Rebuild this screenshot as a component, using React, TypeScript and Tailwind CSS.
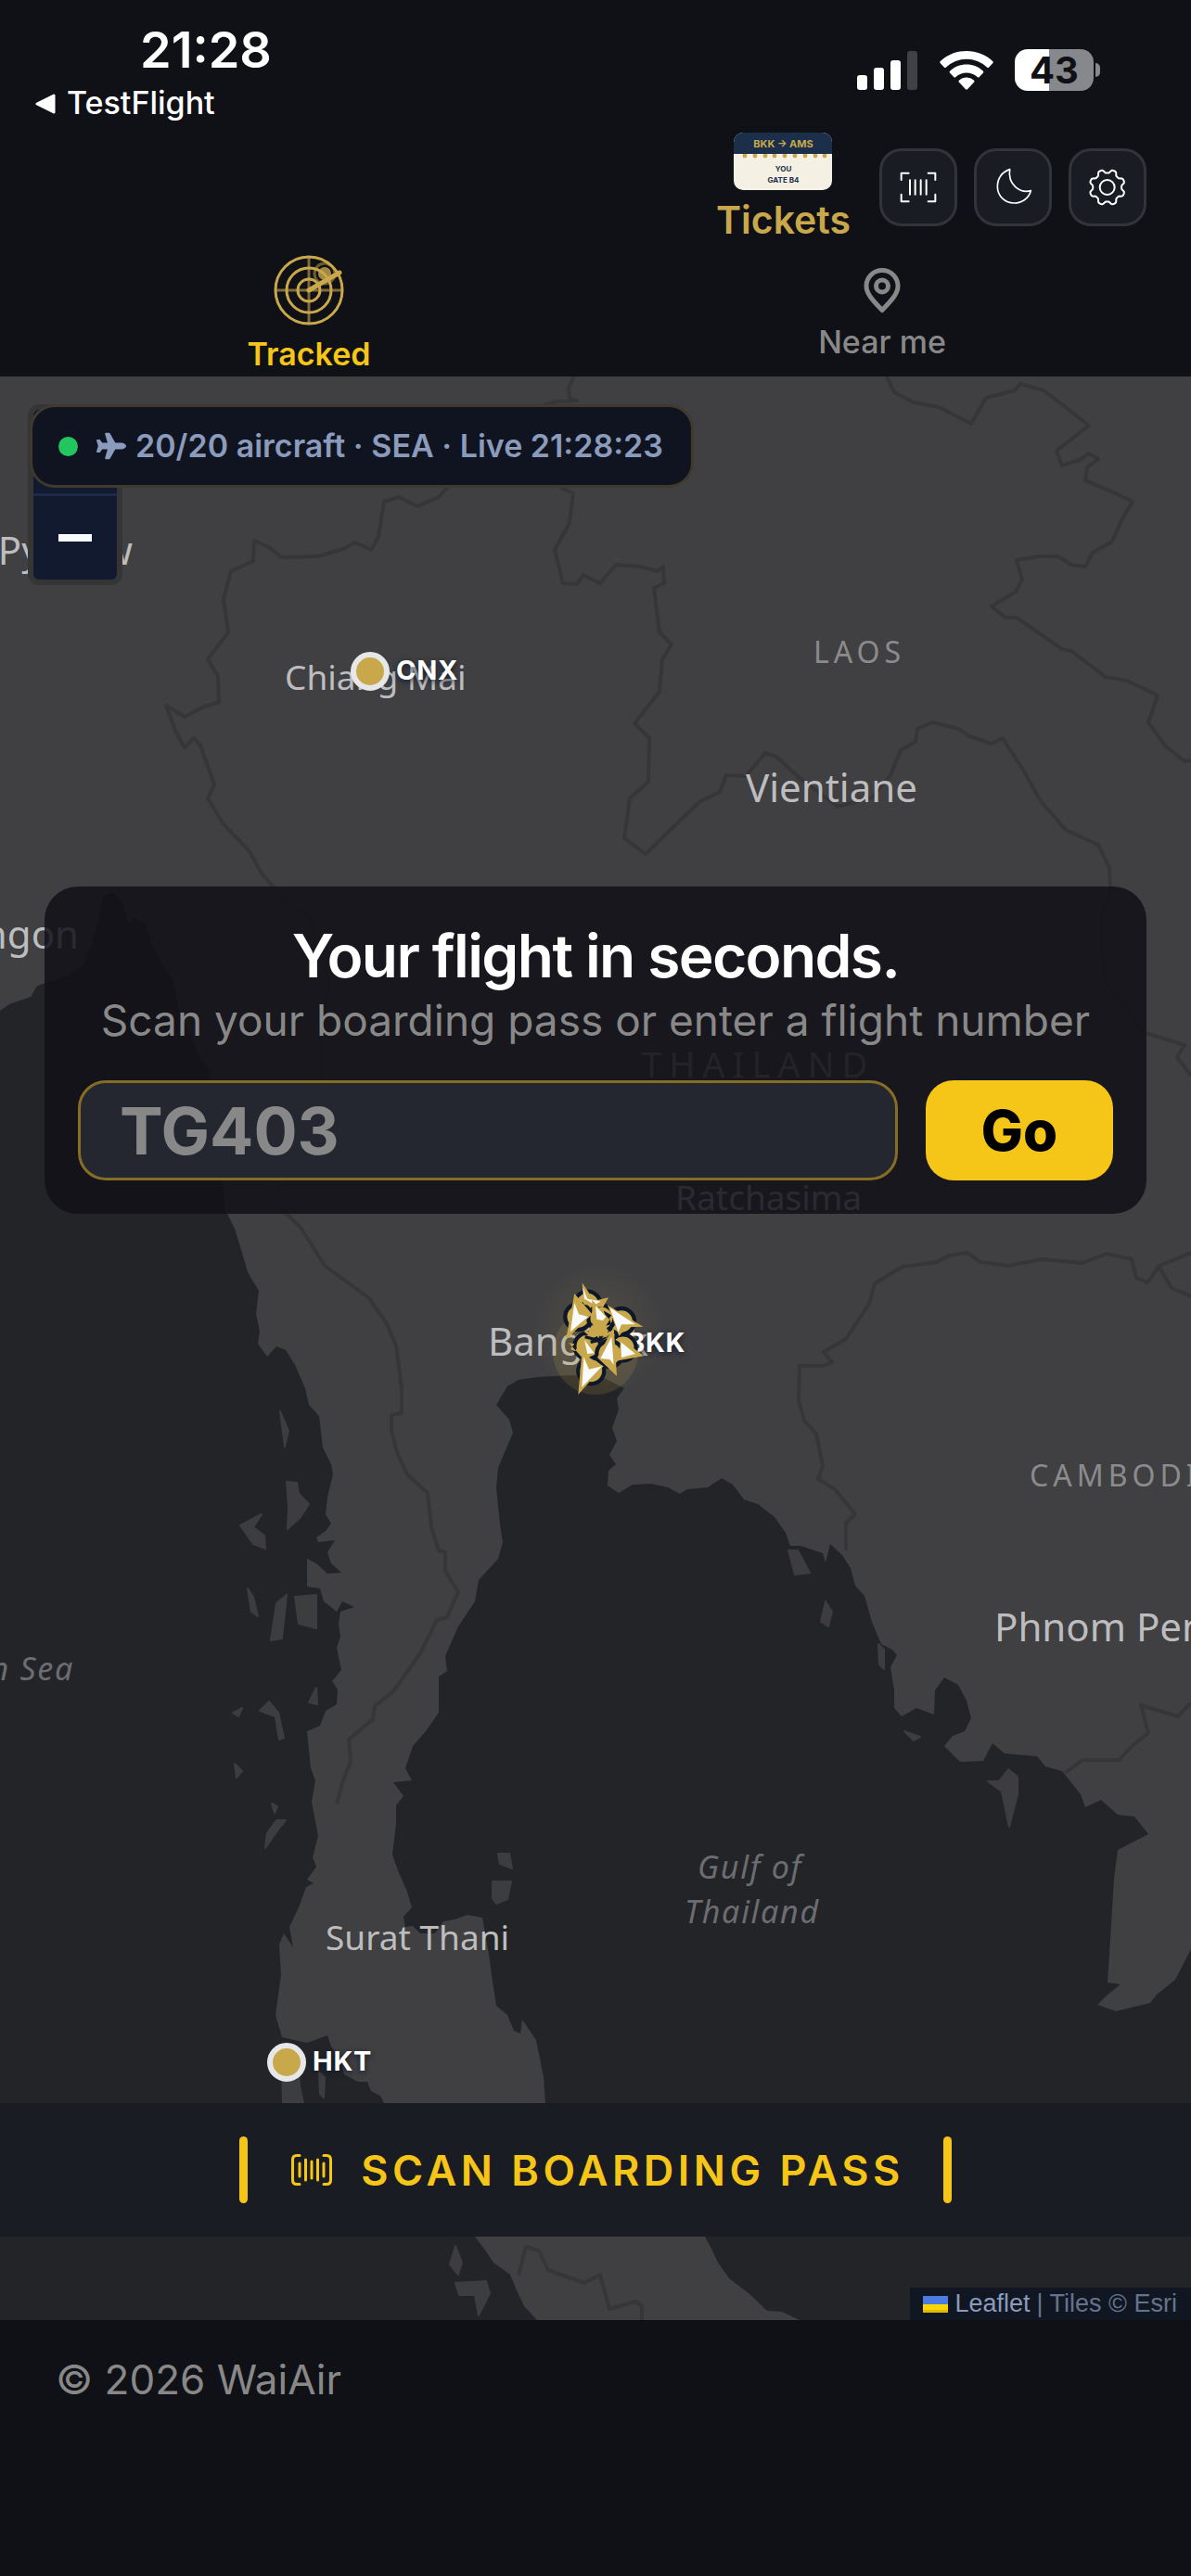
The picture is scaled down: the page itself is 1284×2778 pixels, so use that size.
import type { ReactNode } from "react";
import { FaPlane } from "react-icons/fa";

const WATER = [
  // Andaman Sea
  "M0 1090L10 1083L33 1075L40 1063L75 1052L90 1040L100 1015L108 985L112 965L122 962L133 975L138 995L146 990L158 998L163 1018L175 1040L186 1056L190 1075L195 1095L207 1120L213 1138L224 1150L228 1170L235 1220L240 1275L243 1305L253 1325L261 1351L267 1372L279 1392L276 1417L280 1436L278 1449L288 1463L298 1452L308 1456L318 1472L329 1497L333 1515L344 1527L348 1561L357 1579L359 1590L353 1615L351 1633L357 1643L351 1651L341 1658L343 1663L361 1661L353 1674L357 1686L368 1696L353 1697L341 1686L331 1681L331 1711L345 1713L349 1727L363 1738L369 1727L382 1733L367 1738L365 1751L367 1765L363 1777L368 1801L358 1813L364 1822L363 1838L351 1845L345 1861L331 1867L335 1907L340 1920L336 1943L343 1980L337 2003L341 2013L331 2027L338 2031L330 2035L322 2057L312 2078L316 2100L306 2085L301 2097L303 2130L297 2173L304 2197L331 2203L353 2195L357 2207L365 2217L371 2237L386 2245L396 2245L400 2255L410 2260L414 2268L450 2330L500 2395L512 2412L524 2428L532 2440L550 2453L557 2470L565 2487L579 2502L0 2502Z",
  // Gulf of Thailand
  "M580 1485L616 1483L649 1485L673 1497L665 1508L667 1520L660 1540L665 1554L657 1569L664 1579L656 1586L655 1602L667 1610L682 1601L702 1600L720 1604L733 1611L741 1606L763 1604L778 1594L790 1601L802 1617L817 1622L835 1636L847 1653L852 1667L863 1667L887 1675L890 1685L895 1665L908 1677L917 1691L922 1710L932 1721L940 1749L950 1773L962 1779L967 1785L960 1798L964 1823L964 1842L972 1851L988 1842L1007 1849L1008 1823L1018 1809L1033 1817L1042 1834L1047 1853L1040 1867L1027 1872L1018 1883L1035 1900L1060 1899L1070 1880L1083 1891L1118 1894L1127 1905L1145 1910L1165 1935L1170 1949L1187 1941L1205 1957L1223 1959L1238 1978L1205 1995L1201 2026L1196 2108L1194 2138L1208 2140L1193 2152L1183 2162L1203 2169L1240 2160L1247 2151L1267 2135L1284 2102L1284 2502L862 2502L843 2493L827 2492L807 2473L786 2457L774 2440L766 2423L760 2412L720 2370L640 2330L588 2268L586 2240L578 2200L563 2178L561 2193L554 2190L547 2173L535 2163L530 2130L527 2107L520 2068L504 2065L490 2070L478 2072L469 2085L453 2085L445 2077L437 2078L435 2067L444 2057L439 2040L429 2017L423 2000L427 1967L427 1947L435 1937L424 1922L444 1920L437 1907L445 1883L459 1867L473 1847L473 1808L482 1802L480 1786L494 1754L512 1727L516 1704L537 1681L542 1663L539 1644L535 1604L537 1583L553 1545L549 1531L535 1515L547 1495L559 1488Z",
];

const ISLANDS = [
  "M302 1522L311 1543L307 1560Z",
  "M309 1598L320 1599L322 1611L333 1622L324 1636L310 1649L311 1626Z",
  "M259 1645L282 1633L273 1647L285 1656L286 1670L273 1665Z",
  "M267 1713L273 1722L278 1743L271 1738Z",
  "M298 1729L309 1720L304 1767L292 1769Z",
  "M318 1722L341 1720L341 1756L322 1751Z",
  "M333 1836L341 1820L342 1838Z",
  "M280 1845L290 1835L300 1847L306 1874L301 1876L297 1851Z",
  "M251 1847L261 1842L257 1851Z",
  "M253 1902L261 1910L255 1917Z",
  "M293 1945L299 1948L296 1955Z",
  "M288 1977L298 1963L308 1963L300 1973L286 1993Z",
  "M537 1999L549 1999L552 2015L539 2010Z",
  "M531 2029L551 2029L547 2048L535 2053L531 2047Z",
  "M304 2222L322 2233L323 2250L327 2268L305 2268Z",
  "M344 2235L350 2240L349 2262L345 2258Z",
  "M850 1672L860 1672L873 1696L857 1698Z",
  "M890 1727L897 1738L893 1754L885 1749Z",
  "M947 1773L953 1779L953 1800L948 1795Z",
  "M975 1867L992 1873L985 1877Z",
  "M1065 1921L1077 1921L1087 1908L1097 1916L1097 1935L1088 1970L1080 1932Z",
  "M491 2422L498 2440L494 2453L485 2442Z",
  "M491 2462L524 2460L528 2473L516 2497L512 2475L495 2475Z",
];

const BORDERS = [
  "M619 406L613 418L614 429L622 432L600 433L587 437L560 470L520 500L482 526L473 536L450 546L430 536L414 541L408 579L400 593L383 585L370 592L343 600L303 601L290 590L274 583L273 605L249 616L241 646L246 682L224 711L235 729L236 757L218 763L199 773L179 761L190 790L199 806L209 796L216 804L231 846L224 861L241 889L269 918L282 942L313 977L335 990L338 1005L355 1060L345 1110L345 1160L320 1220L295 1270L305 1305L325 1325L350 1365L398 1400L416 1426L427 1451L433 1497L433 1524L422 1526L422 1544L429 1569L439 1590L461 1610L465 1647L473 1672L480 1674L480 1694L494 1717L482 1744L471 1747L453 1783L424 1824L404 1840L402 1854L376 1876L378 1900L370 1920L363 1945",
  "M604 526L618 532L614 564L598 593L607 629L622 630L629 620L647 629L664 609L690 611L709 616L715 611L716 629L705 634L711 682L724 695L714 711L711 746L684 780L700 796L699 843L679 861L673 904L696 921L732 886L755 864L776 854L783 836L804 837L825 812L837 816L862 839L903 870L940 860L960 836L971 809L987 800L989 786L1005 779L1034 786L1045 794L1069 802L1081 796L1104 832L1122 864L1149 895L1184 911L1196 936L1197 957L1187 990L1191 1057L1232 1113L1277 1127L1269 1140L1284 1160",
  "M956 406L964 423L985 434L1012 439L1047 457L1063 429L1094 421L1100 414L1125 421L1150 440L1174 459L1139 486L1145 502L1164 496L1174 489L1184 495L1172 504L1170 518L1207 534L1221 541L1209 561L1199 584L1178 596L1170 611L1155 609L1141 600L1120 600L1096 604L1102 625L1095 638L1069 654L1084 666L1096 666L1145 700L1155 702L1192 730L1215 734L1248 750L1238 779L1256 804L1277 821L1284 820",
  "M1284 1351L1250 1365L1237 1383L1225 1378L1220 1358L1193 1352L1167 1362L1123 1358L1087 1365L1057 1361L1043 1351L1023 1354L1010 1361L973 1366L943 1384L937 1406L912 1444L888 1458L897 1469L888 1473L862 1473L861 1510L867 1532L880 1546L887 1581L882 1595L900 1606L922 1633L912 1642L912 1672",
  "M1250 1367L1263 1389L1284 1398",
  "M1148 1912L1167 1898L1207 1898L1220 1883L1238 1869L1230 1839L1270 1851L1284 1836",
  "M559 2453L567 2423L581 2427L591 2448L630 2462L647 2453L657 2490L685 2482L692 2487L692 2502",
];

type Place = { name: string; x: number; y: number; anchor?: "end"; cls: string };

const CAPITAL = "fill-[#bdbdbf] text-[42px]";
const CITY = "fill-[#bdbdbf] text-[37px]";
const COUNTRY = "fill-[#8b8b8d] text-[32px]";
const SEA = "fill-[#6c6d71] text-[34px] italic tracking-wider";

const PLACES: Place[] = [
  { name: "Nay Pyi Taw", x: 143, y: 609, anchor: "end", cls: CAPITAL },
  { name: "Chiang Mai", x: 307, y: 744, cls: CITY },
  { name: "Vientiane", x: 804, y: 865, cls: CAPITAL },
  { name: "Yangon", x: 85, y: 1023, anchor: "end", cls: CAPITAL },
  { name: "Ratchasima", x: 728, y: 1305, cls: CITY },
  { name: "Bangkok", x: 526, y: 1462, cls: CAPITAL },
  { name: "Phnom Penh", x: 1072, y: 1770, cls: CAPITAL },
  { name: "Surat Thani", x: 351, y: 2103, cls: CITY },
  { name: "LAOS", x: 877, y: 715, cls: COUNTRY + " tracking-[5px]" },
  { name: "THAILAND", x: 692, y: 1162, cls: "fill-[#8b8b8d] text-[38px] tracking-[8px]" },
  { name: "CAMBODIA", x: 1110, y: 1603, cls: COUNTRY + " tracking-[5px]" },
  { name: "Andaman Sea", x: 80, y: 1812, anchor: "end", cls: SEA },
  { name: "Gulf of", x: 752, y: 2026, cls: SEA },
  { name: "Thailand", x: 738, y: 2074, cls: SEA },
];

const AIRPORTS = [
  { code: "CNX", x: 399, y: 724 },
  { code: "HKT", x: 309, y: 2224 },
];

const DISCS = [
  [190, 140], [160, 180], [300, 195], [235, 185], [190, 275], [305, 280], [262, 300], [202, 355],
];

const DARTS = [
  { body: "173,70 212,128 258,118 240,150 178,140", wing: "175,85 190,122 232,130 215,142 180,122" },
  { body: "148,105 205,172 120,255", wing: "148,135 162,172 192,180 135,228" },
  { body: "205,125 262,190 225,250 205,200", wing: "216,145 250,180 240,192 220,188" },
  { body: "255,142 370,212 318,214 292,242", wing: "262,150 345,205 300,205 290,230" },
  { body: "130,265 148,268 135,285 150,292 175,250 215,300 180,320", wing: "180,255 212,298 190,300" },
  { body: "372,307 290,322 298,250", wing: "298,262 345,300 300,312" },
  { body: "275,212 285,372 222,312", wing: "268,245 275,335 262,318 232,315" },
  { body: "172,298 242,340 160,432", wing: "178,310 195,350 238,340 172,408" },
];

function AircraftCluster() {
  return (
    <g transform="translate(570 1360) scale(.3333)">
      {DISCS.map(([cx, cy]) => (
        <circle key={cx + "-" + cy} cx={cx} cy={cy} r="42" fill="#c9a84c" stroke="#0f172a" strokeWidth="13" />
      ))}
      <circle cx="225" cy="230" r="30" fill="#c9a84c" />
      <path d="M205 205l22 -10l10 12l24 -6l-10 -30l14 8M182 245l30 8l26 -12M200 262l34 -8l14 -10" fill="none" stroke="#0f172a" strokeWidth="10" />
      {DARTS.map((d) => (
        <g key={d.body}>
          <polygon points={d.body} fill="#c9a84c" />
          <polygon points={d.wing} fill="#f8fafc" />
        </g>
      ))}
      <path d="M182 225l14 12l4 -14l12 14l14 -8l8 10l20 -16l-8 18l28 -14" fill="none" stroke="#c9a84c" strokeWidth="8" />
    </g>
  );
}

function AirportCode({ x, y, code }: { x: number; y: number; code: string }) {
  return (
    <text x={x} y={y} className="fill-white text-[29px] font-bold tracking-wide [font-family:Inter,sans-serif] [text-shadow:0_2px_6px_#0f172a]">
      {code}
    </text>
  );
}

function MapCanvas() {
  return (
    <svg
      viewBox="0 406 1284 2096"
      preserveAspectRatio="xMidYMid slice"
      className="absolute inset-0 h-full w-full [font-family:'Noto_Sans',sans-serif]"
      role="img"
      aria-label="Map of Thailand"
    >
      <defs>
        <radialGradient id="halo">
          <stop offset="0" stopColor="#c9a84c" stopOpacity=".14" />
          <stop offset="1" stopColor="#c9a84c" stopOpacity="0" />
        </radialGradient>
      </defs>
      <rect y="406" width="1284" height="2096" fill="#404042" />
      {BORDERS.map((d) => (
        <path key={d} d={d} fill="none" stroke="#363638" strokeWidth="4" strokeLinejoin="round" />
      ))}
      {WATER.map((d) => (
        <path key={d} d={d} fill="#232428" />
      ))}
      {ISLANDS.map((d) => (
        <path key={d} d={d} fill="#3d3d40" stroke="#3d3d40" strokeWidth="2" strokeLinejoin="round" />
      ))}
      {PLACES.map((p) => (
        <text key={p.name} x={p.x} y={p.y} textAnchor={p.anchor} className={p.cls}>
          {p.name}
        </text>
      ))}
      {AIRPORTS.map((a) => (
        <g key={a.code}>
          <circle cx={a.x} cy={a.y} r="18" fill="#c9a84c" stroke="#e6e7e9" strokeWidth="6" />
          <AirportCode x={a.x + 28} y={a.y + 9} code={a.code} />
        </g>
      ))}
      <AirportCode x={676} y={1458} code="BKK" />
      <circle cx="645" cy="1434" r="72" fill="url(#halo)" />
      <circle cx="642" cy="1458" r="46" fill="#c9a84c" opacity=".15" />
      <AircraftCluster />
    </svg>
  );
}

function SignalIcon() {
  return (
    <svg viewBox="0 0 66 42" className="h-[42px] w-[66px]" fill="#fff" aria-hidden="true">
      <rect x="0" y="26" width="11" height="16" rx="3" />
      <rect x="18" y="18" width="11" height="24" rx="3" />
      <rect x="36" y="10" width="11" height="32" rx="3" />
      <rect x="54" y="0" width="11" height="42" rx="3" fill="#404145" />
    </svg>
  );
}

function WifiIcon() {
  return (
    <svg viewBox="0 0 58 42" className="h-[42px] w-[58px]" fill="#fff" aria-hidden="true">
      <path d="M29 0C18 0 8 4 .8 11c-.7.7-.7 1.600 0 2.300l4 4.200c.6.7 1.500.7 2.200 0A32 32 0 0 1 51 17.500c.7.7 1.600.7 2.200 0l4-4.200c.7-.7.7-1.600 0-2.300C50 4 40 0 29 0Z" />
      <path d="M29 14.500c-7 0-13 2.500-17.800 7-.7.7-.7 1.600 0 2.300l4 4.200c.7.7 1.500.7 2.200 0a17 17 0 0 1 23.200 0c.7.7 1.500.7 2.200 0l4-4.200c.7-.7.7-1.600 0-2.300-4.800-4.500-10.800-7-17.800-7Z" />
      <path d="M29 28.500c-3 0-5.700 1-7.900 2.900-.8.7-.8 1.600-.1 2.300l7 7.600c.6.6 1.400.6 2 0l7-7.600c.7-.7.7-1.600-.1-2.300A12 12 0 0 0 29 28.500Z" />
    </svg>
  );
}

function Battery() {
  return (
    <div className="flex items-center gap-[2px]">
      <div className="flex h-[45px] w-[85px] items-center justify-center rounded-[14px] bg-[linear-gradient(90deg,#fff_44%,#87888c_44%)] text-[40px] leading-none font-bold text-[#101116]">
        43
      </div>
      <div className="h-[15px] w-[5px] rounded-r-full bg-[#87888c]" />
    </div>
  );
}

function StatusBar() {
  return (
    <div className="flex items-start justify-between pr-[98px] pl-[38px]">
      <div className="flex flex-col pt-[22px]">
        <time className="pl-[113px] text-[54px] leading-[64px] font-semibold">21:28</time>
        <a href="#testflight" className="flex h-[57px] items-start gap-3 text-[34px] leading-[50px] font-medium">
          <svg viewBox="0 0 22 22" className="mt-[15px] size-[22px]" aria-hidden="true">
            <path d="M2 11L20 2V20Z" fill="#fff" stroke="#fff" strokeWidth="3" strokeLinejoin="round" />
          </svg>
          TestFlight
        </a>
      </div>
      <div className="mt-[53px] flex items-center gap-[23px]">
        <SignalIcon />
        <WifiIcon />
        <Battery />
      </div>
    </div>
  );
}

function TicketArt() {
  return (
    <span className="flex h-[62px] w-[106px] flex-col overflow-hidden rounded-[10px] bg-[#f5f0e4] text-center font-bold text-[#1b2f4b]">
      <span className="h-[23px] bg-[#1b2f4b] text-[11px] leading-[25px] text-[#c9a84c]">BKK → AMS</span>
      <svg viewBox="0 0 106 6" className="h-[6px] w-full shrink-0" fill="#c9a84c" aria-hidden="true">
        {[12, 23, 34, 44, 55, 66, 77, 88, 98].map((cx) => (
          <circle key={cx} cx={cx} cy="2" r="2.400" />
        ))}
      </svg>
      <span className="mt-1 text-[8px] leading-[12px]">YOU</span>
      <span className="text-[8px] leading-[12px]">GATE B4</span>
    </span>
  );
}

function HeaderButton({ label, children }: { label: string; children: ReactNode }) {
  return (
    <button type="button" aria-label={label} className="size-[84px] rounded-3xl border-[3px] border-[#333439] bg-[#1a1c23]">
      <svg viewBox="9 9 234 234" className="h-full w-full" fill="none" stroke="#fff" strokeWidth="6" strokeLinecap="round" strokeLinejoin="round">
        {children}
      </svg>
    </button>
  );
}

const gearPath =
  "M" +
  Array.from({ length: 144 }, (_, i) => {
    const a = (i / 144) * Math.PI * 2;
    const r = 52 + 6 * Math.tanh(1.8 * Math.cos(8 * (a - Math.PI / 8)));
    return (125 + r * Math.cos(a)).toFixed(1) + " " + (126 + r * Math.sin(a)).toFixed(1);
  }).join("L") +
  "Z";

function Header() {
  return (
    <div className="flex items-start justify-end gap-[31px] pr-12">
      <a href="#tickets" className="flex flex-col items-center">
        <TicketArt />
        <span className="text-[41px] leading-[64px] font-semibold text-[#c9a84c]">Tickets</span>
      </a>
      <div className="mt-[17px] flex gap-[18px]">
        <HeaderButton label="Scan boarding pass">
          <path d="M71 102V80H95M158 80H181V102M181 149V172H158M95 172H71V149" />
          <path d="M99 103V149M116 103V149M134 103V149M152 103V149" />
        </HeaderButton>
        <HeaderButton label="Dark mode">
          <path strokeWidth="5" d="M116 68C90 76 76 98 76 124C76 154 100 177 130 177C155 177 177 162 184 137C150 146 108 118 116 68Z" />
        </HeaderButton>
        <HeaderButton label="Settings">
          <path strokeWidth="6" d={gearPath} />
          <circle strokeWidth="6" cx="125" cy="126" r="24" />
        </HeaderButton>
      </div>
    </div>
  );
}

function RadarIcon() {
  return (
    <svg viewBox="0 0 76 76" className="size-[76px]" fill="none" stroke="#c9a84c" strokeWidth="3" aria-hidden="true">
      <path d="M38 1V75M1 38H75" opacity=".6" />
      <circle cx="38" cy="38" r="36" />
      <circle cx="38" cy="38" r="24" />
      <circle cx="38" cy="38" r="12" />
      <circle cx="55" cy="20" r="11" opacity=".5" />
      <circle cx="55" cy="20" r="7" fill="#c9a84c" stroke="none" opacity=".8" />
      <path d="M38 38L71 19" strokeWidth="5" strokeLinecap="round" />
    </svg>
  );
}

function PinIcon() {
  return (
    <svg viewBox="0 0 40 49" className="h-[49px] w-10" fill="none" stroke="#888" strokeWidth="5" strokeLinejoin="round" aria-hidden="true">
      <path d="M20 45.500C10 35 3 28 3 19.500C3 10 10.500 2.500 20 2.500S37 10 37 19.500C37 28 30 35 20 45.500Z" />
      <circle cx="20" cy="19.500" r="6.500" />
    </svg>
  );
}

function Tabs() {
  return (
    <nav className="grid grid-cols-2 items-center px-6 pt-1.5">
      <button type="button" aria-current="page" className="flex flex-col items-center gap-[7px] text-[34px] leading-[48px] font-semibold text-[#f5c518]">
        <RadarIcon />
        Tracked
      </button>
      <button type="button" className="flex flex-col items-center gap-[7px] text-[34px] leading-[48px] font-medium text-[#888]">
        <PinIcon />
        Near me
      </button>
    </nav>
  );
}

function ZoomControl() {
  return (
    <div className="absolute top-[30px] left-[30px] flex w-[102px] flex-col overflow-hidden rounded-xl border-[6px] border-[#353536] bg-[#111a2e]">
      <button type="button" aria-label="Zoom in" className="h-[93px] border-b-[3px] border-[#1e2a4a]" />
      <button type="button" aria-label="Zoom out" className="flex h-[90px] items-center justify-center">
        <span className="h-2 w-9 bg-[#f8fafc]" />
      </button>
    </div>
  );
}

function LiveStatus() {
  return (
    <div className="absolute top-[30px] left-8 flex h-[90px] items-center rounded-[27px] border-[3px] border-[#403a2e] bg-[#101420] pr-[30px] pl-7 text-[34px] leading-none font-semibold whitespace-nowrap text-[#8a9bbb]">
      <span className="mr-5 size-[21px] rounded-full bg-[#22c55e]" />
      <FaPlane className="mr-2.5 size-8" aria-hidden="true" />
      20/20 aircraft · SEA · Live 21:28:23
    </div>
  );
}

function FlightSearch() {
  return (
    <section className="absolute inset-x-12 top-[550px] rounded-[36px] bg-[#101116]/85 p-9">
      <h1 className="pt-[2px] text-center text-[64px] leading-[74px] font-semibold tracking-tight">Your flight in seconds.</h1>
      <p className="text-center text-[46px] leading-[64px] text-[#888]">Scan your boarding pass or enter a flight number</p>
      <form className="mt-[33px] flex gap-[30px]" onSubmit={(e) => e.preventDefault()}>
        <input
          type="text"
          aria-label="Flight number"
          placeholder="TG403"
          className="h-[108px] min-w-0 flex-1 rounded-[30px] border-[3px] border-[#856d24] bg-[#242730] px-[42px] text-[70px] leading-none font-bold text-white placeholder:text-[#888]"
        />
        <button type="submit" className="h-[108px] w-[202px] rounded-[30px] bg-[#f5c518] text-[60px] leading-none font-extrabold text-black">
          Go
        </button>
      </form>
    </section>
  );
}

function ScanBar() {
  return (
    <button
      type="button"
      className="absolute inset-x-0 bottom-[90px] flex h-36 items-center justify-center bg-[#1a1c23] text-[45px] leading-none font-semibold tracking-widest whitespace-nowrap text-[#f5c518]"
    >
      <span className="mr-[46px] h-[72px] w-[9px] rounded-full bg-[#f5c518]" />
      <svg viewBox="0 0 46 36" className="mr-[30px] h-9 w-[46px]" fill="none" stroke="#f5c518" strokeWidth="3" strokeLinecap="round" strokeLinejoin="round" aria-hidden="true">
        <path d="M10 2.500H7Q2.500 2.500 2.500 7V29Q2.500 33.500 7 33.500H10M36 2.500H39Q43.500 2.500 43.500 7V29Q43.500 33.500 39 33.500H36" />
        <path d="M10 11V25M16.500 7V29M23 9V27M29.500 7V29M36 11V25" />
      </svg>
      SCAN BOARDING PASS
      <span className="ml-[42px] h-[72px] w-[9px] rounded-full bg-[#f5c518]" />
    </button>
  );
}

function Attribution() {
  return (
    <div className="absolute right-0 bottom-0 flex h-[35px] items-center gap-[7px] bg-[#111623] pr-[15px] pl-[14px] text-[27px] leading-none whitespace-nowrap text-[#64748b] [font-family:'Liberation_Sans',sans-serif]">
      <a href="#leaflet" className="flex items-center gap-[7px] text-[#8a9bbb]">
        <svg viewBox="0 0 27 18" className="h-[18px] w-[27px]" aria-hidden="true">
          <path d="M0 0h27v9H0z" fill="#4c7be1" />
          <path d="M0 9h27v9H0z" fill="#ffd500" />
          <path d="M0 15h27v3H0z" fill="#e0bc00" />
        </svg>
        Leaflet
      </a>
      <span>| Tiles © Esri</span>
    </div>
  );
}

export default function App() {
  return (
    <div className="flex min-h-screen flex-col bg-[#101116] text-white [font-family:Inter,sans-serif]">
      <header>
        <StatusBar />
        <Header />
        <Tabs />
      </header>
      <main className="relative min-h-[1200px] flex-1 overflow-hidden bg-[#404042]">
        <MapCanvas />
        <ZoomControl />
        <LiveStatus />
        <FlightSearch />
        <ScanBar />
        <Attribution />
      </main>
      <footer className="px-[60px] pt-9 pb-[184px] text-[44px] leading-[56px] text-[#888]">© 2026 WaiAir</footer>
    </div>
  );
}
